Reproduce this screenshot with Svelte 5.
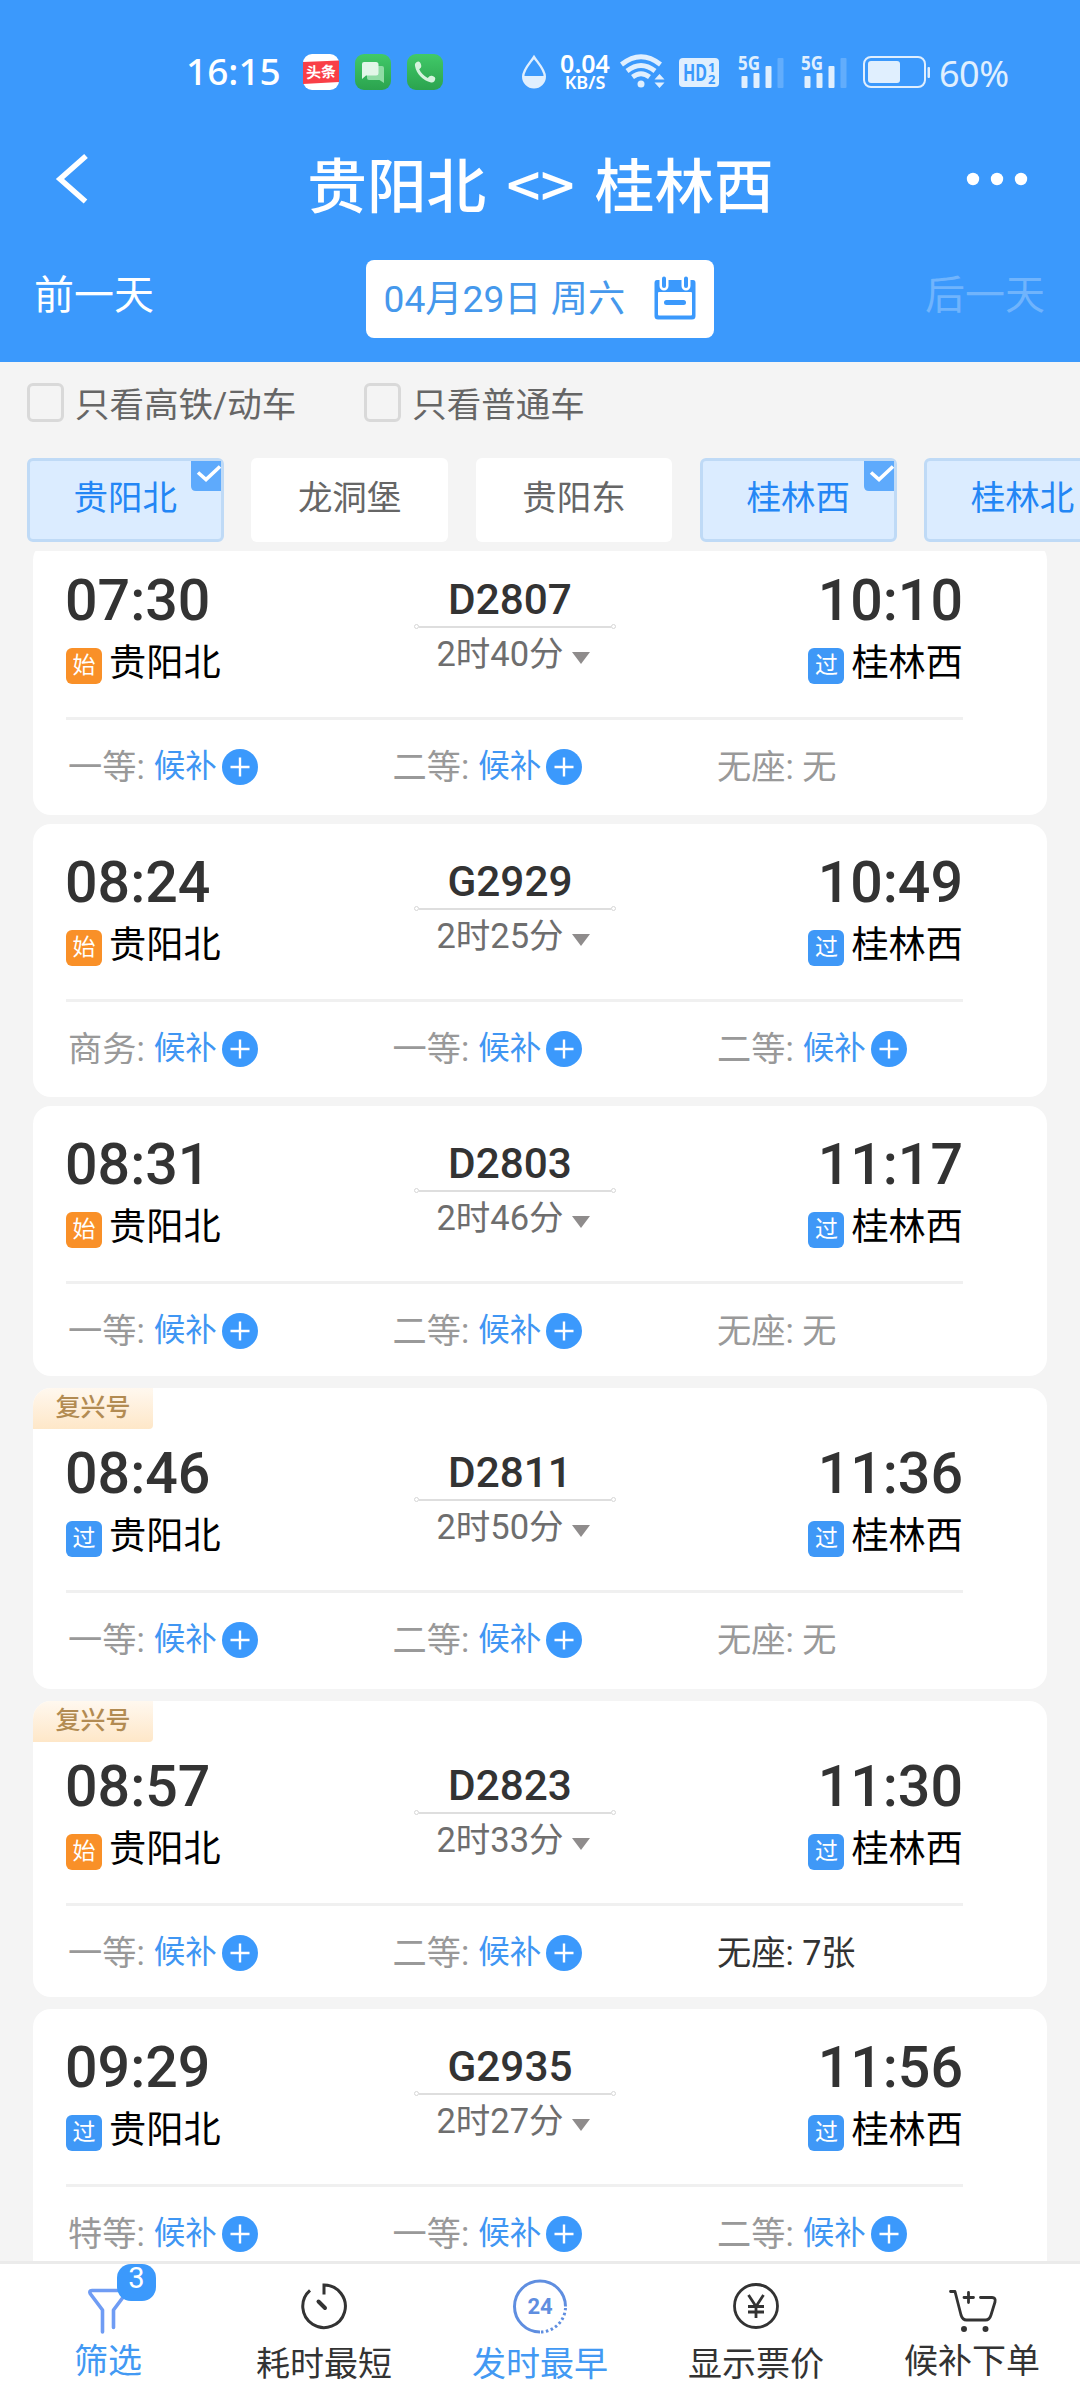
<script lang="ts">
  type Seat = { name: string; left?: string };
  type Train = {
    no: string;
    depart: string;
    arrive: string;
    duration: string;
    origin: boolean;
    fuxing?: boolean;
    height: number;
    seats: Seat[];
  };

  const none = "无";

  const trains: Train[] = [
    { no: "D2807", depart: "07:30", arrive: "10:10", duration: "2时40分", origin: true, height: 273, seats: [{ name: "一等" }, { name: "二等" }, { name: "无座", left: none }] },
    { no: "G2929", depart: "08:24", arrive: "10:49", duration: "2时25分", origin: true, height: 273, seats: [{ name: "商务" }, { name: "一等" }, { name: "二等" }] },
    { no: "D2803", depart: "08:31", arrive: "11:17", duration: "2时46分", origin: true, height: 270, seats: [{ name: "一等" }, { name: "二等" }, { name: "无座", left: none }] },
    { no: "D2811", depart: "08:46", arrive: "11:36", duration: "2时50分", origin: false, fuxing: true, height: 301, seats: [{ name: "一等" }, { name: "二等" }, { name: "无座", left: none }] },
    { no: "D2823", depart: "08:57", arrive: "11:30", duration: "2时33分", origin: true, fuxing: true, height: 296, seats: [{ name: "一等" }, { name: "二等" }, { name: "无座", left: "7张" }] },
    { no: "G2935", depart: "09:29", arrive: "11:56", duration: "2时27分", origin: false, height: 273, seats: [{ name: "特等" }, { name: "一等" }, { name: "二等" }] },
  ];

  let stations = $state([
    { name: "贵阳北", checked: true },
    { name: "龙洞堡", checked: false },
    { name: "贵阳东", checked: false },
    { name: "桂林西", checked: true },
    { name: "桂林北", checked: true },
  ]);

  const kinds = ["只看高铁/动车", "只看普通车"];
</script>

{#snippet signal()}
  <svg class="signal" width="48" height="36" viewBox="0 0 48 36">
    <text x="0" y="16" font-size="20" font-weight="700" textLength="22" lengthAdjust="spacingAndGlyphs" fill="#e0effe">5G</text>
    <g fill="#e0effe">
      <rect x="3.500" y="22" width="6" height="12" rx="1" />
      <rect x="15.500" y="19" width="6" height="15" rx="1" />
      <rect x="27.500" y="12" width="6" height="22" rx="1" />
    </g>
    <rect x="39.500" y="4" width="6" height="30" rx="1" fill="#62adfc" />
  </svg>
{/snippet}

<div class="screen">
  <header class="header">
    <div class="status">
      <span class="clock">16:15</span>
      <svg class="app first" width="36" height="36" viewBox="0 0 36 36">
        <rect width="36" height="36" rx="9" fill="#fff" />
        <path d="M0 8L36 6.500V28L0 30Z" fill="#f93f47" />
        <text x="18" y="23.500" font-size="15" font-weight="700" text-anchor="middle" fill="#fff" transform="rotate(-3 18 18)">头条</text>
      </svg>
      <svg class="app" width="36" height="36" viewBox="0 0 36 36">
        <defs>
          <linearGradient id="green" x2="0" y2="1">
            <stop stop-color="#41c968" />
            <stop offset="1" stop-color="#2ba34e" />
          </linearGradient>
        </defs>
        <rect width="36" height="36" rx="9" fill="url(#green)" />
        <path d="M14 12H27Q29 12 29 14V29L24.500 26H14Q12 26 12 24V14Q12 12 14 12Z" fill="#8fdca5" />
        <path d="M9 8H21Q23.500 8 23.500 10.500V19Q23.500 21.500 21 21.500H11L7 25V10Q7 8 9 8Z" fill="#e2f6e8" />
      </svg>
      <svg class="app" width="36" height="36" viewBox="0 0 36 36">
        <rect width="36" height="36" rx="9" fill="url(#green)" />
        <path d="M11 7.500C8.500 8 7.500 10 8 12C9.500 20 16 26.500 24 28.500C26.500 29 28 27 28.300 24.800C28.500 22.500 24 20.800 22.500 22.300L20.700 24C17 22 14 19 12.200 15.300L14 13.500C15 12 13.500 7 11 7.500Z" fill="#d5f3dd" />
      </svg>

      <svg class="drop" width="26" height="36" viewBox="0 0 26 36">
        <path d="M13 3C9 9 2.200 15.500 2.200 22.500A10.800 10.800 0 0 0 23.800 22.500C23.800 15.500 17 9 13 3Z" fill="none" stroke="#e0effe" stroke-width="2.400" />
        <path d="M2.500 22H23.500A10.500 11 0 0 1 2.500 22Z" fill="#e0effe" />
      </svg>
      <span class="speed"><b>0.04</b><b class="unit">KB/S</b></span>
      <svg class="wifi" width="46" height="36" viewBox="0 0 46 36">
        <g fill="none" stroke="#e0effe" stroke-width="4.800">
          <path d="M1.500 10.500Q21 -5 40.500 10.500" />
          <path d="M7 17Q21 6 35 17" />
          <path d="M12.500 23Q21 16.500 29.500 23" />
        </g>
        <circle cx="21" cy="30" r="3.500" fill="#e0effe" />
        <path d="M34.500 25.500L39.500 20L44.500 25.500ZM34.500 28.500H44.500L39.500 34Z" fill="#e0effe" />
      </svg>
      <svg class="hd" width="40" height="29" viewBox="0 0 40 29">
        <rect width="40" height="29" rx="4" fill="#e0effe" />
        <g fill="#3b99fc" font-weight="700">
          <text x="4" y="22.500" font-size="23" textLength="24" lengthAdjust="spacingAndGlyphs">HD</text>
          <text x="29" y="14" font-size="13">1</text>
          <text x="29" y="25.500" font-size="13">2</text>
        </g>
      </svg>
      {@render signal()}
      {@render signal()}
      <svg class="battery" width="68" height="34" viewBox="0 0 68 34">
        <rect x="1" y="2" width="61" height="30" rx="7" fill="none" stroke="#e0effe" stroke-width="2" />
        <rect x="5" y="6" width="32" height="22" rx="3" fill="#e0effe" />
        <rect x="64.500" y="12" width="2.500" height="11" rx="1" fill="#e0effe" />
      </svg>
      <span class="percent">60%</span>
    </div>

    <div class="titlebar">
      <svg width="32" height="50" viewBox="0 0 32 50">
        <path d="M30 2L4 25L29.500 47.500" fill="none" stroke="#fff" stroke-width="5.500" />
      </svg>
      <h1>贵阳北 &lt;&gt; 桂林西</h1>
      <svg width="62" height="14" viewBox="0 0 62 14" fill="#fff">
        <circle cx="7" cy="7" r="6.200" />
        <circle cx="31" cy="7" r="6.200" />
        <circle cx="55" cy="7" r="6.200" />
      </svg>
    </div>

    <div class="days">
      <span>前一天</span>
      <button class="date">
        <span>04月29日 周六</span>
        <svg width="42" height="44" viewBox="0 0 42 44">
          <path d="M3 3H39Q41.500 3 41.500 6V39Q41.500 42.500 38 42.500H4Q0.500 42.500 0.500 39V6Q0.500 3 3 3Z" fill="#3b99fc" />
          <rect x="4" y="15" width="34" height="23.500" rx="1" fill="#fff" />
          <path d="M10 0V9M32 0V9" stroke="#fff" stroke-width="9" stroke-linecap="round" />
          <path d="M10 1.500V9M32 1.500V9" stroke="#3b99fc" stroke-width="4" stroke-linecap="round" />
          <path d="M12.500 25.500H29.500" stroke="#3b99fc" stroke-width="5" stroke-linecap="round" />
        </svg>
      </button>
      <span class="disabled">后一天</span>
    </div>
  </header>

  <div class="kinds">
    {#each kinds as kind}
      <label><i class="box"></i><span>{kind}</span></label>
    {/each}
  </div>

  <div class="chips">
    {#each stations as station}
      <button class="chip" class:checked={station.checked} onclick={() => (station.checked = !station.checked)}>
        {station.name}
        {#if station.checked}
          <svg class="tick" width="30" height="30" viewBox="0 0 30 30">
            <path d="M0 0H30V30H5Q0 30 0 25Z" fill="#5eaafc" />
            <path d="M7 11.500L15 18.500L29 5.500" fill="none" stroke="#fff" stroke-width="3.600" />
          </svg>
        {/if}
      </button>
    {/each}
  </div>

  <main class="list">
    {#each trains as train}
      <article class="card" class:tagged={train.fuxing} style:height="{train.height}px">
        {#if train.fuxing}
          <span class="tag">复兴号</span>
        {/if}
        <div class="trip">
          <div class="end">
            <strong>{train.depart}</strong>
            <div class="station">
              <i class="mark" class:origin={train.origin}>{train.origin ? "始" : "过"}</i>
              <span>贵阳北</span>
            </div>
          </div>
          <div class="middle">
            <b>{train.no}</b>
            <i class="track"></i>
            <div class="duration">{train.duration}<i class="caret"></i></div>
          </div>
          <div class="end right">
            <strong>{train.arrive}</strong>
            <div class="station">
              <i class="mark">过</i>
              <span>桂林西</span>
            </div>
          </div>
        </div>
        <div class="seats">
          {#each train.seats as seat}
            <div class="seat" class:available={seat.left && seat.left !== none}>
              {#if seat.left}
                <span>{seat.name}: {seat.left}</span>
              {:else}
                <span>{seat.name}:</span>
                <em>候补</em>
                <svg width="36" height="36" viewBox="0 0 36 36">
                  <circle cx="18" cy="18" r="18" fill="#3b99fc" />
                  <path d="M8.500 18H27.500M18 8.500V27.500" stroke="#fff" stroke-width="2.400" />
                </svg>
              {/if}
            </div>
          {/each}
        </div>
      </article>
    {/each}
  </main>

  <nav class="tabs">
    <div class="tab active raised">
      <span class="icon">
        <svg width="60" height="60" viewBox="0 0 60 60" fill="none" stroke="#6f9cf4" stroke-width="3.600" stroke-linecap="round" stroke-linejoin="round">
          <path d="M24.500 56V34L12.500 18Q10.500 14.500 14 14.500H46.500Q49.500 14.500 47.500 18L35.500 34V51.500" />
        </svg>
        <i class="count">3</i>
      </span>
      <span>筛选</span>
    </div>
    <div class="tab">
      <span class="icon">
        <svg width="60" height="60" viewBox="0 0 60 60" fill="none" stroke="#333" stroke-width="3">
          <path d="M30 19V9.500A21.300 21.300 0 1 1 16 14.800" transform="translate(0 -0.500)" />
          <path d="M24.500 25.500L31 32" stroke-width="4" stroke-linecap="round" />
        </svg>
      </span>
      <span>耗时最短</span>
    </div>
    <div class="tab active">
      <span class="icon">
        <svg width="60" height="60" viewBox="0 0 60 60">
          <path d="M55.500 30.500A25.500 25.500 0 1 0 30 56" fill="none" stroke="#5f8ee0" stroke-width="3" />
          <path d="M31 56A25.500 25.500 0 0 0 55.500 32" fill="none" stroke="#5f8ee0" stroke-width="3" stroke-dasharray="2.500 2.500" />
          <text x="30" y="38" font-size="22" font-weight="700" text-anchor="middle" fill="#5f8ee0">24</text>
        </svg>
      </span>
      <span>发时最早</span>
    </div>
    <div class="tab">
      <span class="icon">
        <svg width="60" height="60" viewBox="0 0 60 60" fill="none" stroke="#333" stroke-width="2.800">
          <circle cx="30" cy="30" r="21.500" />
          <path d="M22.500 19L30 30.500L37.500 19M30 30.500V42M22 30.500H38M22 36H38" />
        </svg>
      </span>
      <span>显示票价</span>
    </div>
    <div class="tab raised">
      <span class="icon">
        <svg width="60" height="60" viewBox="0 0 60 60" fill="none" stroke="#333" stroke-width="2.800" stroke-linecap="round" stroke-linejoin="round">
          <path d="M8.500 15.500H13L19 39Q20.500 44 24.500 44H43.500Q47.500 44 49 39L53 26Q54 21.500 50 21.500H38.500" />
          <path d="M26.500 16.500V26.500M22 21.500H31.500" />
          <circle cx="22" cy="53" r="1.600" fill="#333" />
          <circle cx="43.500" cy="53" r="1.600" fill="#333" />
        </svg>
      </span>
      <span>候补下单</span>
    </div>
  </nav>
</div>

<style>
  :global(body) {
    margin: 0;
  }
  .screen {
    display: flex;
    flex-direction: column;
    width: 1080px;
    height: 2400px;
    overflow: hidden;
    background: #f4f4f4;
    font-family: Roboto, "Noto Sans CJK SC", sans-serif;
    color: #333;
  }
  svg {
    display: block;
    flex: none;
    overflow: visible;
  }
  i,
  em {
    font-style: normal;
  }
  button {
    border: 0;
    padding: 0;
    font: inherit;
  }

  .header {
    height: 362px;
    flex: none;
    background: #3b99fc;
    color: #fff;
  }
  .status {
    display: flex;
    align-items: center;
    height: 36px;
    padding: 54px 0 0 185px;
    font-family: "Noto Sans", "Noto Sans CJK SC", sans-serif;
  }
  .clock {
    width: 117px;
    padding-left: 1px;
    font-size: 37px;
    font-weight: 500;
    line-height: 34px;
    margin-bottom: 2px;
    white-space: nowrap;
  }
  .app {
    margin-left: 16px;
  }
  .app.first {
    margin-left: 0;
  }
  .drop {
    margin-left: 78px;
  }
  .speed {
    display: flex;
    flex-direction: column;
    align-items: center;
    width: 54px;
    margin-left: 11px;
  }
  .speed b {
    margin-top: -1px;
    font-size: 25px;
    font-weight: 600;
    line-height: 20px;
  }
  .speed .unit {
    margin-top: 1px;
    font-size: 18px;
    line-height: 16px;
  }
  .wifi {
    margin-left: 8px;
  }
  .hd {
    margin: 0 19px 0 13px;
  }
  .signal + .signal {
    margin-left: 15px;
  }
  .battery {
    margin-left: 14px;
  }
  .percent {
    margin-left: 8px;
    padding-top: 3px;
    font-size: 36px;
    line-height: 36px;
    letter-spacing: -0.5px;
    color: #e0effe;
  }

  .titlebar {
    display: flex;
    align-items: center;
    justify-content: space-between;
    height: 90px;
    padding: 46px 52px 0 56px;
  }
  .titlebar svg {
    margin-top: -4px;
  }
  h1 {
    margin: 2px 0 0 27px;
    font-family: "Noto Sans CJK SC", sans-serif;
    font-size: 59.600px;
    font-weight: 500;
    line-height: 90px;
    word-spacing: 7px;
    white-space: nowrap;
  }

  .days {
    display: flex;
    align-items: center;
    justify-content: space-between;
    height: 78px;
    padding: 34px 35px 0 34px;
    font-size: 40px;
  }
  .days > span {
    line-height: 68px;
    margin-bottom: 7px;
  }
  .days .disabled {
    color: #70b4fc;
  }
  .date {
    display: flex;
    align-items: center;
    justify-content: space-between;
    width: 348px;
    height: 78px;
    padding: 0 18px;
    border-radius: 8px;
    background: #fff;
    color: #4598ec;
    box-sizing: border-box;
    font-size: 37.200px;
    white-space: nowrap;
  }
  .date span {
    margin-bottom: 6px;
  }

  .kinds {
    display: flex;
    gap: 68px;
    height: 82px;
    padding: 0 27px;
    color: #666;
    font-size: 34.500px;
  }
  .kinds label {
    display: flex;
    align-items: center;
    gap: 11px;
    height: 81px;
  }
  .kinds span {
    margin-bottom: 2px;
  }
  .box {
    width: 37px;
    height: 39px;
    box-sizing: border-box;
    border: 3px solid #d9d9d9;
    border-radius: 6px;
  }

  .chips {
    display: flex;
    flex: none;
    gap: 27.600px;
    height: 84px;
    padding: 14px 0 9px 27px;
  }
  .chip {
    position: relative;
    flex: none;
    width: 196.700px;
    height: 84px;
    padding-bottom: 10px;
    border-radius: 6px;
    background: #fff;
    color: #666;
    font-size: 34.500px;
  }
  .chip.checked {
    border: 3px solid #bfdaf6;
    background: #dbecff;
    color: #2386f5;
  }
  .tick {
    position: absolute;
    top: 0;
    right: 0;
  }

  .list {
    flex: 1;
    min-height: 0;
    overflow: hidden;
    padding: 0 33px;
  }
  .card {
    box-sizing: border-box;
    overflow: hidden;
    padding: 0 84px 0 33px;
    border-radius: 18px;
    background: #fff;
  }
  /* the list is scrolled by a few pixels */
  .card:first-child {
    margin-top: -9px;
  }
  .card + .card {
    margin-top: 9px;
  }
  .card + .tagged,
  .tagged + .card {
    margin-top: 12px;
  }
  .tag {
    display: block;
    width: 120px;
    height: 41px;
    margin: 0 0 -14px -33px;
    border-radius: 0 0 4px 0;
    background: linear-gradient(#fff8ef, #fee7c8);
    color: #b28b52;
    font-size: 25px;
    font-weight: 500;
    line-height: 40px;
    text-align: center;
  }
  .trip {
    display: grid;
    grid-template-columns: 1fr 200px 1fr;
    height: 175px;
    box-sizing: border-box;
    padding-top: 29px;
  }
  .end strong {
    display: block;
    margin-left: -1px;
    font-size: 57.300px;
    font-weight: 500;
    line-height: 60px;
  }
  .station {
    display: flex;
    align-items: center;
    gap: 7px;
    height: 60px;
    color: #000;
    font-size: 37.200px;
    line-height: 50px;
  }
  .station span {
    margin-top: 4px;
  }
  .mark {
    width: 36px;
    height: 36px;
    margin-top: 9px;
    border-radius: 6px;
    background: #3f98f7;
    color: #fff;
    font-size: 23px;
    line-height: 36px;
    text-align: center;
  }
  .mark.origin {
    background: #f99028;
  }
  .right {
    text-align: right;
  }
  .right .station {
    justify-content: flex-end;
  }
  .middle {
    display: flex;
    flex-direction: column;
    align-items: center;
  }
  .middle b {
    padding: 3px 9px 0 0;
    font-size: 42.300px;
    font-weight: 500;
    line-height: 51px;
  }
  .track {
    position: relative;
    width: 192px;
    height: 2px;
    margin-top: 1px;
    background: #dedede;
  }
  .track::before,
  .track::after {
    content: "";
    position: absolute;
    top: -2px;
    left: -5px;
    width: 3px;
    height: 3px;
    border: 1.500px solid #d6d6d6;
    border-radius: 50%;
    background: #fff;
  }
  .track::after {
    left: auto;
    right: -5px;
  }
  .duration {
    display: flex;
    align-items: center;
    gap: 8px;
    padding: 1px 3px 0 0;
    color: #6e6e6e;
    font-size: 34.500px;
    line-height: 51px;
  }
  .caret {
    margin-top: 6px;
    border: 9.500px solid transparent;
    border-top: 12px solid #8f8c8c;
    border-bottom: 0;
  }
  .seats {
    display: grid;
    grid-template-columns: 324.500px 324.500px 1fr;
    padding-top: 21px;
    border-top: 3px solid #f0f0f0;
  }
  .seat {
    display: flex;
    align-items: center;
    height: 51px;
    padding-left: 2px;
    color: #999;
    font-size: 34.200px;
    line-height: 46px;
    white-space: nowrap;
  }
  .seat.available {
    color: #333;
  }
  .seat em {
    margin: 0 5px 0 9px;
    color: #3f96f3;
    font-size: 31.500px;
  }

  .tabs {
    display: grid;
    grid-template-columns: repeat(5, 216px);
    flex: none;
    height: 136px;
    border-top: 3px solid #ebebeb;
    background: #fff;
  }
  .tab {
    display: flex;
    flex-direction: column;
    align-items: center;
    padding-top: 12px;
    font-size: 34px;
    line-height: 52px;
  }
  .tab.active {
    color: #4299f3;
  }
  .icon {
    position: relative;
    height: 62px;
  }
  .raised .icon {
    height: 59px;
  }
  .count {
    position: absolute;
    top: -12px;
    left: 39px;
    width: 39px;
    height: 37px;
    border-radius: 14px;
    background: #3b99fc;
    color: #fff;
    font-size: 29px;
    line-height: 29px;
    text-align: center;
  }
</style>
